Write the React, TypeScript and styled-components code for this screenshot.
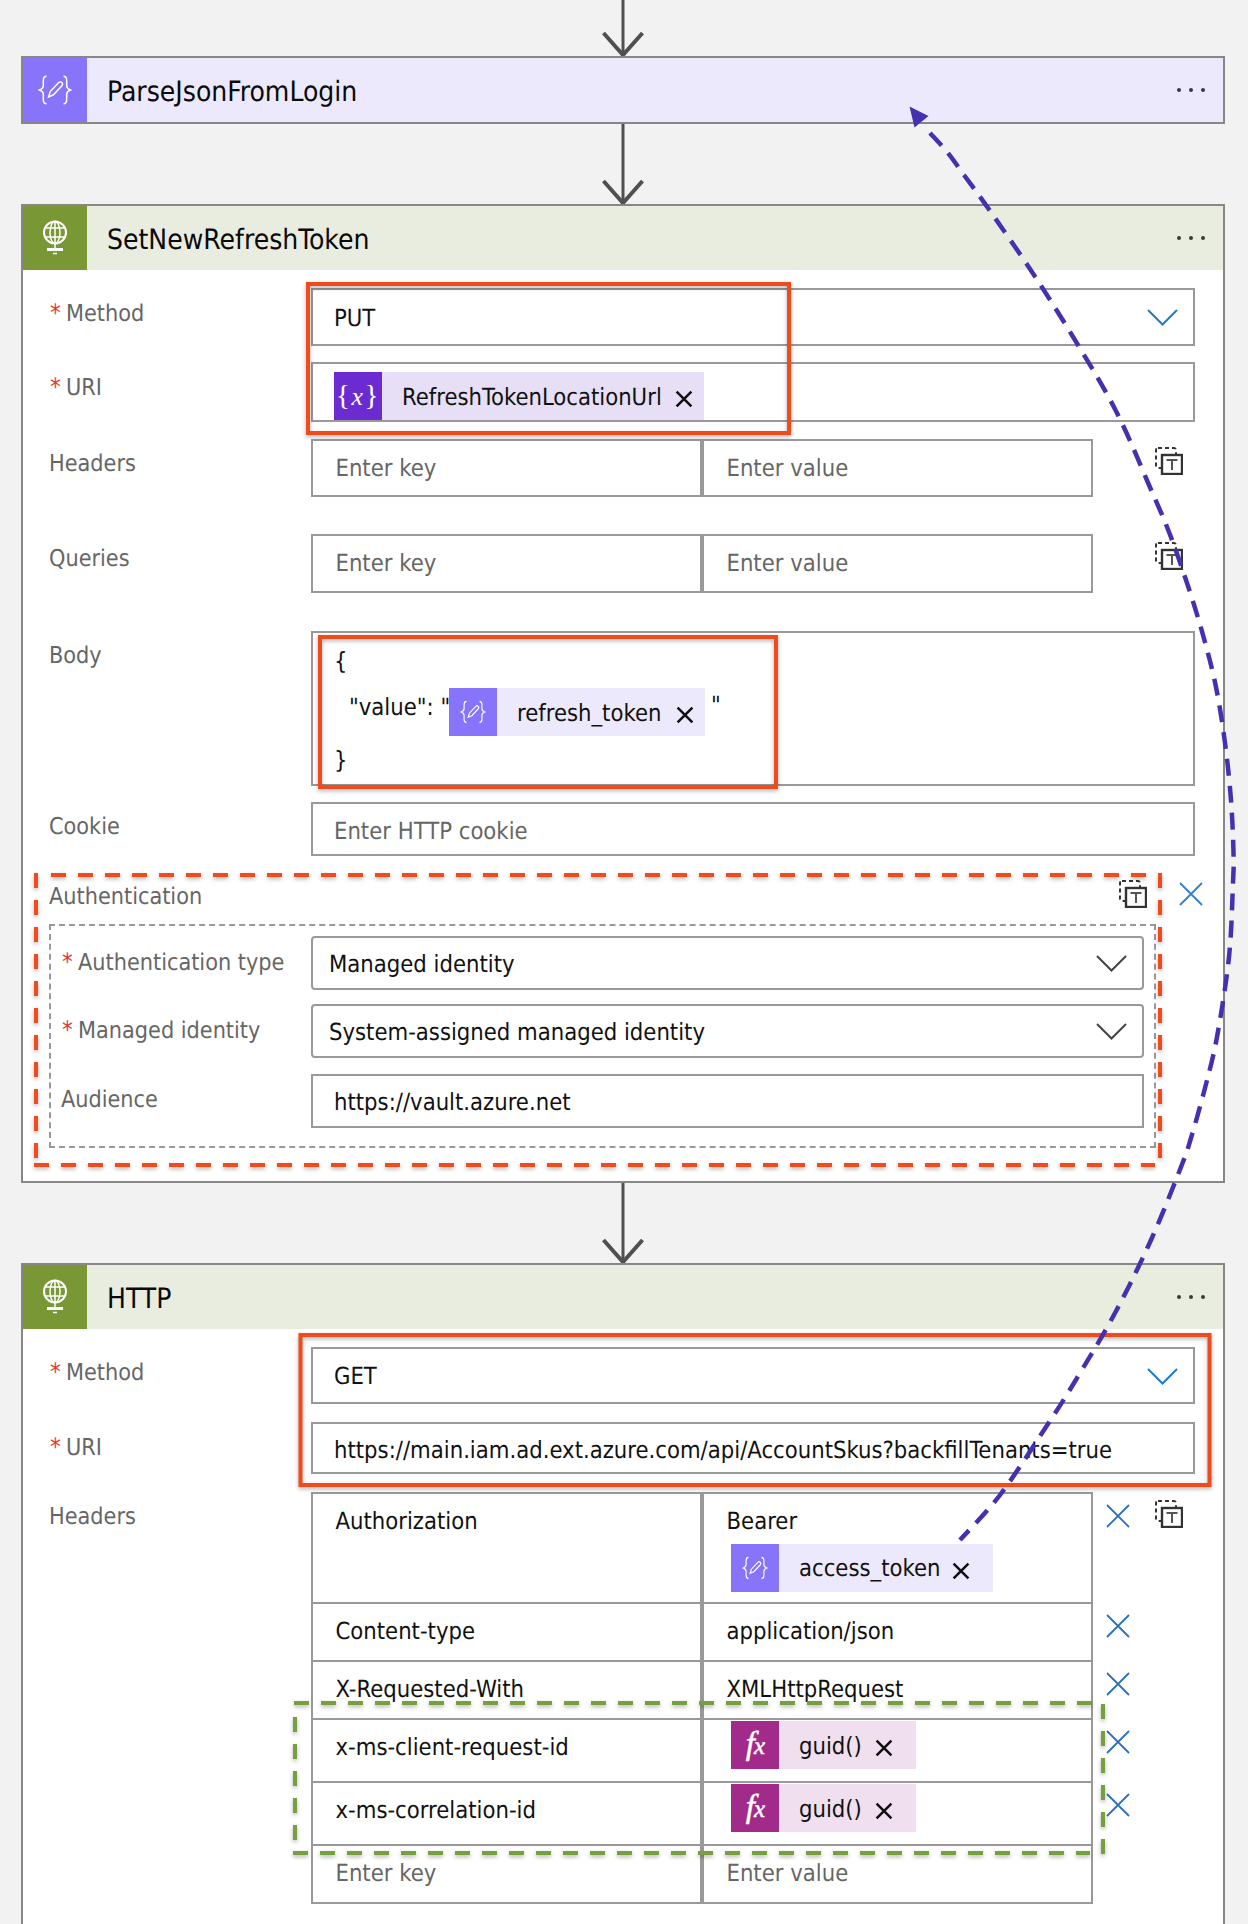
import styled, { createGlobalStyle } from "styled-components";

const GlobalStyle = createGlobalStyle`
  * { box-sizing: border-box; }
  html, body { margin: 0; padding: 0; background: #f2f2f2; }
  body {
    font-family: "DejaVu Sans", "Noto Sans", sans-serif;
    font-stretch: condensed;
    text-rendering: geometricPrecision;
    color: #111;
  }
`;

const Page = styled.div`
  position: relative;
  width: 1248px;
  height: 1924px;
  overflow: hidden;
  background: #f2f2f2;
  padding-left: 21px;
`;

const ConnectorWrap = styled.div<{ $h: number }>`
  width: 1204px;
  height: ${({ $h }) => $h}px;
  display: flex;
  justify-content: center;
`;

const Card = styled.section`
  width: 1204px;
  border: 2px solid #8a8686;
  background: #fff;
`;

const CardHeader = styled.header<{ $bg: string }>`
  height: 64px;
  display: flex;
  align-items: center;
  padding-right: 18px;
  background: ${({ $bg }) => $bg};
`;

const HeaderIcon = styled.div<{ $bg: string }>`
  width: 64px;
  height: 64px;
  flex: none;
  display: flex;
  align-items: center;
  justify-content: center;
  background: ${({ $bg }) => $bg};
`;

const CardTitle = styled.h2`
  flex: 1;
  margin: 0;
  padding: 2px 0 0 20px;
  font-size: 28px;
  font-weight: 400;
  color: #0a0a0a;
`;

const Dots = styled.div`
  display: flex;
  gap: 8px;
  span {
    width: 4px;
    height: 4px;
    border-radius: 50%;
    background: #3a3a3a;
  }
`;

const CardBody = styled.div`
  padding: 0 20px 33px 26px;
`;

const Row = styled.div<{ $mt: number }>`
  display: grid;
  grid-template-columns: 262px 884px;
  margin-top: ${({ $mt }) => $mt}px;
`;

const Label = styled.div`
  height: 48px;
  line-height: 50px;
  font-size: 23.2px;
  color: #666;
  white-space: nowrap;
`;

const Required = styled.span`
  display: inline-block;
  width: 16px;
  margin-left: 1px;
  color: #e8392c;
  font-size: 24px;
`;

const Field = styled.div<{ $h: number; $rounded?: boolean; $nudge?: number }>`
  height: ${({ $h }) => $h}px;
  width: 100%;
  display: flex;
  align-items: center;
  justify-content: space-between;
  padding: ${({ $nudge }) => $nudge ?? 1}px 15px 0 ${({ $rounded }) => ($rounded ? 16 : 21)}px;
  border: 2px solid #999;
  border-radius: ${({ $rounded }) => ($rounded ? "4px" : "0")};
  font-size: 23.6px;
  color: #111;
  white-space: nowrap;
`;

const ChipField = styled(Field)`
  align-items: flex-start;
  padding-top: 8px;
`;

const Placeholder = styled.span`
  color: #666;
`;

const BodyField = styled.div`
  height: 155px;
  padding-left: 21px;
  border: 2px solid #999;
  font-size: 23.6px;
  display: grid;
  grid-template-rows: 55px 48px 1fr;
  align-items: center;
`;

const BodyLine = styled.div`
  display: flex;
  align-items: center;
`;

const JsonKey = styled.span`
  width: 115px;
  flex: none;
  padding-left: 15px;
  margin-top: -10px;
  white-space: pre;
`;

const JsonQuote = styled.span`
  margin: -14px 0 0 6px;
`;

const Chip = styled.div<{ $w: number; $bg: string; $pad: number }>`
  width: ${({ $w }) => $w}px;
  height: 48px;
  flex: none;
  display: flex;
  align-items: center;
  padding-right: ${({ $pad }) => $pad}px;
  background: ${({ $bg }) => $bg};
  font-size: 23.6px;
  color: #111;
`;

const ChipIcon = styled.div<{ $bg: string }>`
  width: 48px;
  height: 48px;
  flex: none;
  display: flex;
  align-items: center;
  justify-content: center;
  background: ${({ $bg }) => $bg};
  color: #fff;
  font-family: "Liberation Serif", serif;
`;

const VarGlyph = styled.span`
  font-size: 29px;
  letter-spacing: 1.5px;
  i { font-size: 26px; }
`;

const FxGlyph = styled.span`
  font-size: 33px;
  font-style: italic;
  letter-spacing: -1px;
  -webkit-text-stroke: 0.5px #fff;
  small { font-size: 25px; }
`;

const ChipText = styled.span`
  flex: 1;
  padding: 1px 0 0 20px;
  white-space: nowrap;
`;

const ChipClose = styled.svg`
  flex: none;
  width: 18px;
  height: 18px;
  margin-top: 6px;
  fill: none;
  stroke: #111;
  stroke-width: 2.4;
`;

const PairRow = styled.div<{ $h: number }>`
  display: grid;
  grid-template-columns: 391px 391px 62px 28px;
  height: ${({ $h }) => $h}px;
  margin-top: -2px;
  &:first-child { margin-top: 0; }
`;

const PairCell = styled.div`
  border: 2px solid #999;
  padding: 11.5px 0 0 22.5px;
  font-size: 23.6px;
  line-height: 30px;
  color: #111;
  white-space: nowrap;
`;

const ChipCell = styled(PairCell)`
  padding: 1px 0 0 27px;
`;

const BearerChip = styled(Chip)`
  margin: 8px 0 0 4.5px;
`;

const PairTable = styled.div`
  display: flex;
  flex-direction: column;
`;

const RemoveSlot = styled.div`
  padding: 12px 0 0 13px;
`;

const CopySlot = styled.div`
  padding-top: 8px;
`;

const AuthTitleRow = styled.div`
  height: 68px;
  display: flex;
  padding-top: 26px;
`;

const AuthTitle = styled.div`
  flex: 1;
  font-size: 23.2px;
  line-height: 30px;
  color: #666;
`;

const AuthCopy = styled.div`
  margin: -2px 32px 0 0;
`;

const AuthBox = styled.div`
  width: 1107px;
  height: 224px;
  border: 2px dashed #999;
  padding: 10px 10px 0 10px;
  display: flex;
  flex-direction: column;
  gap: 14px;
`;

const AuthRow = styled.div`
  display: grid;
  grid-template-columns: 250px 833px;
`;

const AudienceRow = styled(AuthRow)`
  margin-top: 2px;
`;

const AuthLabel = styled(Label)`
  line-height: 52px;
`;

const Overlay = styled.svg`
  position: absolute;
  top: 0;
  left: 0;
  width: 1248px;
  height: 1924px;
  pointer-events: none;
  fill: none;
`;

const Shadowed = styled.g`
  filter: drop-shadow(0 2px 2px rgba(0, 0, 0, 0.3));
`;

const BracesIcon = ({ size }: { size: number }) => (
  <svg width={size} height={size} viewBox="0 0 32 32" fill="none" stroke="#fff" strokeWidth="1.4">
    <path d="M8 3c-3 0-3 2-3 4v5c0 2-1 3-3.5 4C4 17 5 18 5 20v5c0 2 0 4 3 4" />
    <path d="M24 3c3 0 3 2 3 4v5c0 2 1 3 3.5 4-2.500 1-3.500 2-3.500 4v5c0 2 0 4-3 4" />
    <path d="M10 22.500l1.500-5 8-8.500c1-1 2.500-.5 3 0s1 2 0 3l-8 8.500z" />
  </svg>
);

const GlobeIcon = () => (
  <svg width="26" height="36" viewBox="0 0 26 36" fill="none" stroke="#fff" strokeWidth="1.5">
    <circle cx="13" cy="12.500" r="11" strokeWidth="2" />
    <ellipse cx="13" cy="12.500" rx="5" ry="11" />
    <path d="M3 8h20M3 17h20M13 1.500v22M13 24v4" />
    <path d="M5 29.500h16" strokeWidth="3" />
    <path d="M11 33.500h4" strokeWidth="1.500" />
  </svg>
);

const CopyIcon = () => (
  <svg width="28" height="28" viewBox="0 0 28 28" fill="none">
    <rect x="1" y="1" width="20" height="20" rx="2" stroke="#333" strokeWidth="2" strokeDasharray="4 3" />
    <rect x="7" y="8" width="20" height="19" fill="#fff" stroke="#333" strokeWidth="2.400" />
    <path d="M11.500 13h11M17 13v10" stroke="#555" strokeWidth="2" />
  </svg>
);

const RemoveIcon = ({ color }: { color: string }) => (
  <svg width="24" height="24" viewBox="0 0 24 24" fill="none" stroke={color} strokeWidth="1.800">
    <path d="M1 1l22 22M23 1L1 23" />
  </svg>
);

const Chevron = ({ color }: { color: string }) => (
  <svg width="31" height="17" viewBox="0 0 31 17" fill="none" stroke={color} strokeWidth="2">
    <path d="M1 1l14.500 14.500L30 1" />
  </svg>
);

const CloseMark = () => (
  <ChipClose viewBox="0 0 17 17">
    <path d="M1.500 1.500l14 14M15.500 1.500l-14 14" />
  </ChipClose>
);

const Connector = ({ h }: { h: number }) => (
  <ConnectorWrap $h={h}>
    <svg width="42" height={h} viewBox={`0 0 42 ${h}`} fill="none" stroke="#505050">
      <path d={`M21 0V${h}`} strokeWidth="3" />
      <path d={`M1.500 ${h - 23}L21 ${h - 1}L40.500 ${h - 23}`} strokeWidth="4" />
    </svg>
  </ConnectorWrap>
);

const Header = ({ title, kind }: { title: string; kind: "parse" | "http" }) => (
  <CardHeader $bg={kind === "parse" ? "#ece9fc" : "#e9eddf"}>
    <HeaderIcon $bg={kind === "parse" ? "#8774fb" : "#799735"}>
      {kind === "parse" ? <BracesIcon size={34} /> : <GlobeIcon />}
    </HeaderIcon>
    <CardTitle>{title}</CardTitle>
    <Dots>
      <span />
      <span />
      <span />
    </Dots>
  </CardHeader>
);

const ParseChip = ({ text, w }: { text: string; w: number }) => (
  <Chip $w={w} $bg="#ece9fc" $pad={11}>
    <ChipIcon $bg="#8774fb">
      <BracesIcon size={26} />
    </ChipIcon>
    <ChipText>{text}</ChipText>
    <CloseMark />
  </Chip>
);

const GuidChip = () => (
  <Chip $w={185} $bg="#f0dfee" $pad={23}>
    <ChipIcon $bg="#a12a8b">
      <FxGlyph>
        f<small>x</small>
      </FxGlyph>
    </ChipIcon>
    <ChipText>guid()</ChipText>
    <CloseMark />
  </Chip>
);

const Pair = ({ h, k, v, muted, copy }: { h: number; k: string; v: string; muted?: boolean; copy?: boolean }) => (
  <PairRow $h={h}>
    <PairCell>{muted ? <Placeholder>{k}</Placeholder> : k}</PairCell>
    <PairCell>{muted ? <Placeholder>{v}</Placeholder> : v}</PairCell>
    <RemoveSlot>{!muted && <RemoveIcon color="#2c6fbf" />}</RemoveSlot>
    <CopySlot>{copy && <CopyIcon />}</CopySlot>
  </PairRow>
);

const EmptyPair = ({ h }: { h: number }) => (
  <PairRow $h={h}>
    <PairCell>
      <Placeholder>Enter key</Placeholder>
    </PairCell>
    <PairCell>
      <Placeholder>Enter value</Placeholder>
    </PairCell>
    <div />
    <CopySlot>
      <CopyIcon />
    </CopySlot>
  </PairRow>
);

// traced from the reference, top to bottom
const CURVE: [number, number][] = [
  [930, 133], [948, 153], [964, 175], [988, 208], [1034, 275], [1078, 345], [1117, 413],
  [1149, 485], [1169, 532], [1187, 583], [1203, 635], [1216, 687], [1225, 743], [1231, 800],
  [1233.5, 853], [1233, 883], [1229, 957], [1217, 1037], [1205, 1088], [1191, 1138], [1181, 1167],
  [1151, 1240], [1115, 1313], [1074, 1383], [1044, 1430], [1000, 1495], [960, 1540],
];

function smoothPath(pts: [number, number][]): string {
  let d = `M${pts[0][0]} ${pts[0][1]}`;
  for (let i = 0; i < pts.length - 1; i++) {
    const p0 = pts[Math.max(i - 1, 0)];
    const p1 = pts[i];
    const p2 = pts[i + 1];
    const p3 = pts[Math.min(i + 2, pts.length - 1)];
    const c1x = p1[0] + (p2[0] - p0[0]) / 6;
    const c1y = p1[1] + (p2[1] - p0[1]) / 6;
    const c2x = p2[0] - (p3[0] - p1[0]) / 6;
    const c2y = p2[1] - (p3[1] - p1[1]) / 6;
    d += ` C${c1x} ${c1y} ${c2x} ${c2y} ${p2[0]} ${p2[1]}`;
  }
  return d;
}

const Annotations = () => (
  <Overlay viewBox="0 0 1248 1924">
    <Shadowed stroke="#f04a1d" strokeWidth="4">
      <rect x="308" y="284" width="481" height="149" />
      <rect x="320" y="637" width="456" height="150" />
      <rect x="300.500" y="1335" width="909" height="150" />
      <g strokeDasharray="15 12">
        <path d="M51 875H1146" />
        <path d="M36 873V1160" />
        <path d="M1160 873V1162" />
        <path d="M34 1165H1155" />
      </g>
    </Shadowed>
    <Shadowed stroke="#76a03f" strokeWidth="4" strokeDasharray="15 12">
      <path d="M294 1703H1092" />
      <path d="M295 1717V1850" />
      <path d="M293 1853H1090" />
      <path d="M1103 1704V1856" />
    </Shadowed>
    <path d={smoothPath(CURVE)} stroke="#4530b0" strokeWidth="4.500" strokeDasharray="17 10" />
    <path d="M909.500 106.500L928.500 116L914.500 127.500Z" fill="#4530b0" />
  </Overlay>
);

export default function App() {
  return (
    <Page>
      <GlobalStyle />
      <Connector h={56} />
      <Card>
        <Header title="ParseJsonFromLogin" kind="parse" />
      </Card>
      <Connector h={80} />
      <Card>
        <Header title="SetNewRefreshToken" kind="http" />
        <CardBody>
          <Row $mt={18}>
            <Label>
              <Required>*</Required>Method
            </Label>
            <Field $h={58}>
              PUT
              <Chevron color="#1f7ad0" />
            </Field>
          </Row>
          <Row $mt={16}>
            <Label>
              <Required>*</Required>URI
            </Label>
            <ChipField $h={60}>
              <Chip $w={370} $bg="#e6dff5" $pad={11}>
                <ChipIcon $bg="#6c2bd0">
                  <VarGlyph>
                    {"{"}
                    <i>x</i>
                    {"}"}
                  </VarGlyph>
                </ChipIcon>
                <ChipText>RefreshTokenLocationUrl</ChipText>
                <CloseMark />
              </Chip>
            </ChipField>
          </Row>
          <Row $mt={17}>
            <Label>Headers</Label>
            <PairTable>
              <EmptyPair h={58} />
            </PairTable>
          </Row>
          <Row $mt={37}>
            <Label>Queries</Label>
            <PairTable>
              <EmptyPair h={59} />
            </PairTable>
          </Row>
          <Row $mt={38}>
            <Label>Body</Label>
            <BodyField>
              <span>{"{"}</span>
              <BodyLine>
                <JsonKey>{'"value": "'}</JsonKey>
                <ParseChip text="refresh_token" w={256} />
                <JsonQuote>"</JsonQuote>
              </BodyLine>
              <span>{"}"}</span>
            </BodyField>
          </Row>
          <Row $mt={16}>
            <Label>Cookie</Label>
            <Field $h={54} $nudge={4}>
              <Placeholder>Enter HTTP cookie</Placeholder>
            </Field>
          </Row>
          <AuthTitleRow>
            <AuthTitle>Authentication</AuthTitle>
            <AuthCopy>
              <CopyIcon />
            </AuthCopy>
            <RemoveIcon color="#2f80d8" />
          </AuthTitleRow>
          <AuthBox>
            <AuthRow>
              <AuthLabel>
                <Required>*</Required>Authentication type
              </AuthLabel>
              <Field $h={54} $rounded>
                Managed identity
                <Chevron color="#444" />
              </Field>
            </AuthRow>
            <AuthRow>
              <AuthLabel>
                <Required>*</Required>Managed identity
              </AuthLabel>
              <Field $h={54} $rounded>
                System-assigned managed identity
                <Chevron color="#444" />
              </Field>
            </AuthRow>
            <AudienceRow>
              <AuthLabel>Audience</AuthLabel>
              <Field $h={54}>https://vault.azure.net</Field>
            </AudienceRow>
          </AuthBox>
        </CardBody>
      </Card>
      <Connector h={80} />
      <Card>
        <Header title="HTTP" kind="http" />
        <CardBody>
          <Row $mt={18}>
            <Label>
              <Required>*</Required>Method
            </Label>
            <Field $h={57}>
              GET
              <Chevron color="#1f7ad0" />
            </Field>
          </Row>
          <Row $mt={18}>
            <Label>
              <Required>*</Required>URI
            </Label>
            <Field $h={52} $nudge={3}>
              https://main.iam.ad.ext.azure.com/api/AccountSkus?backfillTenants=true
            </Field>
          </Row>
          <Row $mt={18}>
            <Label>Headers</Label>
            <PairTable>
              <PairRow $h={112}>
                <PairCell>Authorization</PairCell>
                <PairCell>
                  Bearer
                  <BearerChip $w={262} $bg="#ece9fc" $pad={23}>
                    <ChipIcon $bg="#8774fb">
                      <BracesIcon size={26} />
                    </ChipIcon>
                    <ChipText>access_token</ChipText>
                    <CloseMark />
                  </BearerChip>
                </PairCell>
                <RemoveSlot>
                  <RemoveIcon color="#2c6fbf" />
                </RemoveSlot>
                <CopySlot>
                  <CopyIcon />
                </CopySlot>
              </PairRow>
              <Pair h={60} k="Content-type" v="application/json" />
              <Pair h={60} k="X-Requested-With" v="XMLHttpRequest" />
              <PairRow $h={65}>
                <PairCell>x-ms-client-request-id</PairCell>
                <ChipCell>
                  <GuidChip />
                </ChipCell>
                <RemoveSlot>
                  <RemoveIcon color="#2c6fbf" />
                </RemoveSlot>
              </PairRow>
              <PairRow $h={65}>
                <PairCell>x-ms-correlation-id</PairCell>
                <ChipCell>
                  <GuidChip />
                </ChipCell>
                <RemoveSlot>
                  <RemoveIcon color="#2c6fbf" />
                </RemoveSlot>
              </PairRow>
              <Pair h={60} k="Enter key" v="Enter value" muted />
            </PairTable>
          </Row>
        </CardBody>
      </Card>
      <Annotations />
    </Page>
  );
}
